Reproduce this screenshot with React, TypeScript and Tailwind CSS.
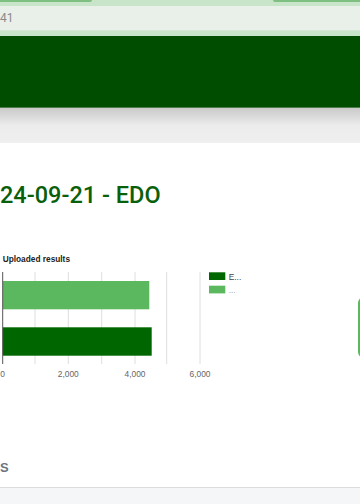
export default function App() {
  // chart geometry: 1,000 units = 33.3px, axis starts at x 2.7
  const ticks = [
    { x: 2.7, label: '0' },
    { x: 68.3, label: '2,000' },
    { x: 135, label: '4,000' },
    { x: 200, label: '6,000' },
  ];
  const grid = [35, 68.3, 101.7, 135, 166.7, 200];

  return (
    <div className="w-[360px] h-[504px] overflow-hidden bg-white font-['Roboto',sans-serif]">
      {/* top search strip */}
      <div className="bg-[#c8e4c9] pb-[5px]">
        <div className="flex justify-between h-[6px]">
          <div className="w-[92px] h-[2px] bg-[#7fc082] rounded-br-[6px]" />
          <div className="w-[87px] h-[2px] bg-[#7fc082] rounded-bl-[6px]" />
        </div>
        <div className="h-[25px] bg-[#e9f0ea] border-b border-[#d6e6d6] flex items-center text-[12px] text-[#8a8a8a]">
          41
        </div>
      </div>

      {/* header bar */}
      <div className="h-[72px] bg-[#004d00] border-b border-[#4d7f4d]" />

      {/* shadow band */}
      <div className="h-[35px] bg-gradient-to-b from-[#cacaca] via-[#ececec] to-[#efefef]" />

      {/* title */}
      <h1 className="mt-[37px] text-[23.5px] leading-[30px] font-medium text-[#0a5f0a] whitespace-nowrap">
        24-09-21 - EDO
      </h1>

      {/* chart row */}
      <div className="mt-[30px] flex">
        <svg width="358" height="150" className="shrink-0" style={{ fontFamily: '"Liberation Sans", Arial, sans-serif' }}>
          <text x="2.7" y="21.5" fontSize="8.3" fontWeight="bold" fill="#222">
            Uploaded results
          </text>
          {grid.map((x) => (
            <line key={x} x1={x} x2={x} y1="32" y2="124" stroke="#dedede" strokeWidth="1" />
          ))}
          <rect x="2.7" y="41" width="146.6" height="28.3" fill="#5cb85f" />
          <rect x="2.7" y="87.3" width="149" height="28.4" fill="#006600" />
          <line x1="2.7" x2="2.7" y1="32" y2="124" stroke="#555" strokeWidth="1" />
          {ticks.map((t) => (
            <text key={t.label} x={t.x} y="137" fontSize="8.4" textAnchor="middle" fill="#666">
              {t.label}
            </text>
          ))}
          <rect x="209" y="32.3" width="16.3" height="7.7" fill="#006600" />
          <text x="228.7" y="39.5" fontSize="8.4" fill="#444">
            E...
          </text>
          <rect x="209" y="45.7" width="16.3" height="7.7" fill="#5cb85f" />
          <text x="228.7" y="53" fontSize="8.4" fill="#aaa">
            ...
          </text>
        </svg>
        <div className="shrink-0 w-[20px] h-[61px] mt-[57px] border-2 border-[#5cb85f] rounded-l-[6px]" />
      </div>

      {/* next section */}
      <div className="mt-[70px] pb-[11px] border-b border-[#dcdcdc]">
        <h2 className="text-[13px] leading-[16px] font-bold text-[#6c757d] font-['Liberation_Sans',Arial,sans-serif]">
          S
        </h2>
      </div>
      <div className="h-[40px] bg-[#f5f6f8]" />
    </div>
  );
}
